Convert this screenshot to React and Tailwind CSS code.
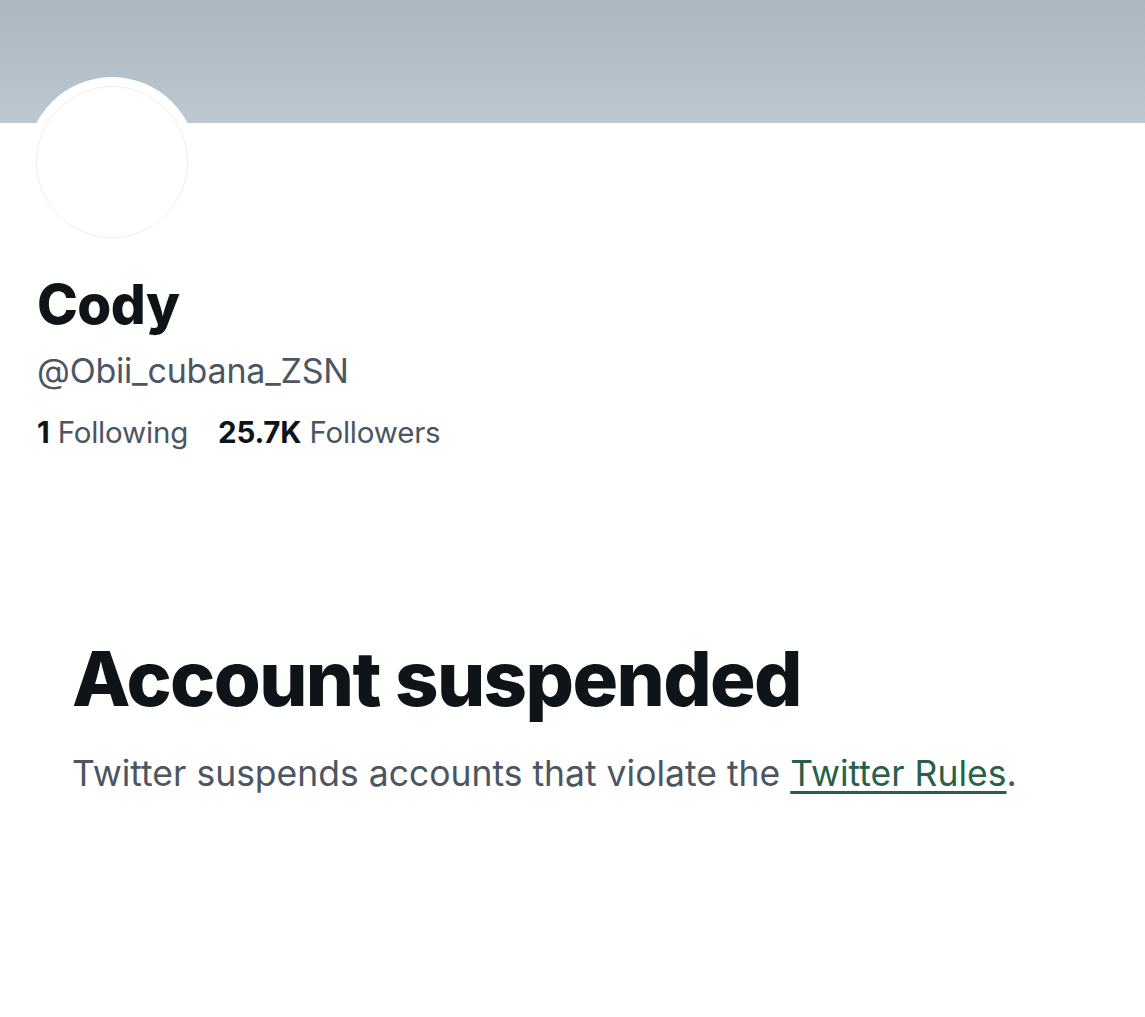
export default function App() {
  return (
    <div className="w-[1145px] h-[1017px] bg-white overflow-hidden" style={{ fontFamily: 'Inter, "Noto Sans", sans-serif' }}>
      <div className="h-[123px] bg-gradient-to-b from-[#aab7c0] to-[#bcc8d0]" />
      <div className="px-[37px]">
        <div className="-mt-[46px] ml-[-10px] w-[170px] h-[170px] rounded-full bg-white flex items-center justify-center">
          <div className="w-[152px] h-[152px] rounded-full border border-[#eceff1] bg-white" />
        </div>
        <h1 className="mt-[22px] text-[55px] leading-[70px] font-extrabold text-[#0f1419] tracking-[-0.6px]">Cody</h1>
        <div className="mt-[10px] text-[34px] leading-[44px] text-[#4b5662] tracking-[-0.2px]">@Obii_cubana_ZSN</div>
        <div className="mt-[19px] flex gap-[30px] text-[29.5px] leading-[40px] tracking-[-0.2px]">
          <span><span className="font-bold text-[#0f1419]">1</span> <span className="text-[#4b5662]">Following</span></span>
          <span><span className="font-bold text-[#0f1419]">25.7K</span> <span className="text-[#4b5662]">Followers</span></span>
        </div>
      </div>
      <div className="px-[72px] mt-[180px]">
        <h2 className="text-[76px] leading-[92px] font-extrabold text-[#0f1419] tracking-[-1.6px]">Account suspended</h2>
        <p className="mt-[28px] text-[35.5px] leading-[44px] text-[#4b5662] tracking-[0px]">
          Twitter suspends accounts that violate the{' '}
          <a className="text-[#28604a] underline decoration-[3px] underline-offset-[5px]">Twitter Rules</a>.
        </p>
      </div>
    </div>
  );
}
